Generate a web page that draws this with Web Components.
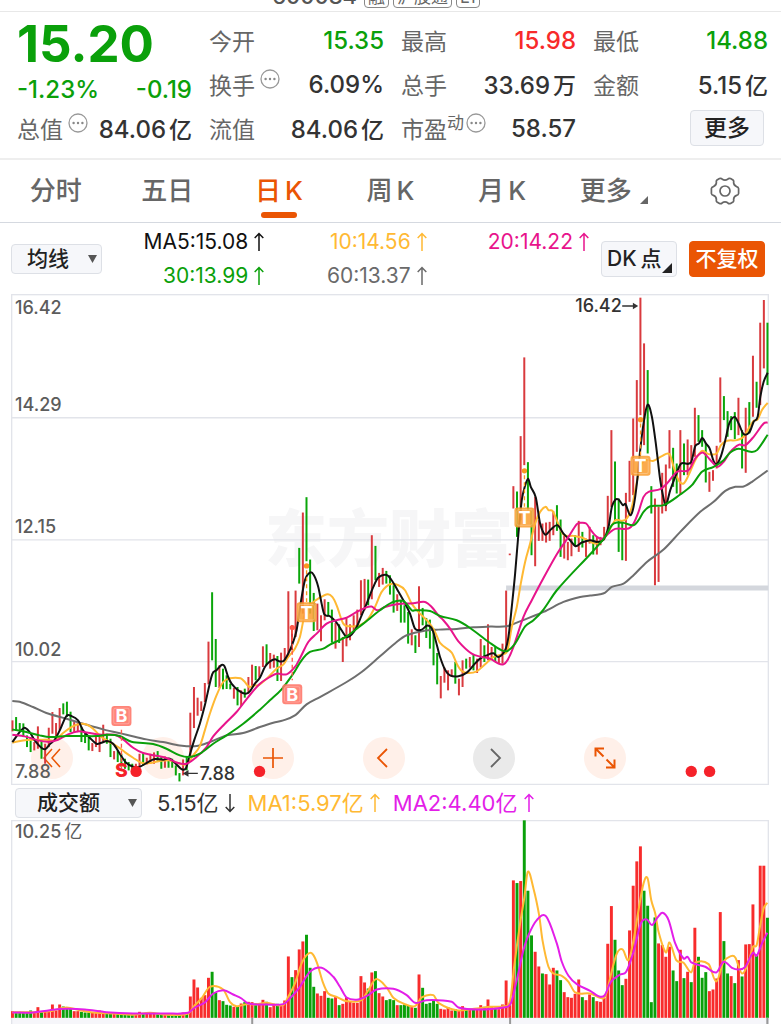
<!DOCTYPE html>
<html lang="zh-CN">
<head>
<meta charset="utf-8">
<meta name="viewport" content="width=device-width, initial-scale=1">
<title>行情</title>
<style>
html{background:#fff}
body{margin:0;color:#333;font-family:Inter,"Noto Sans CJK SC",sans-serif;--green:#0aa00a;--red:#f82a2a;--accent:#ea5504;--line:#e4e4ea}
</style>
</head>
<body>
<stock-page></stock-page>
<script>
const define=(name,html,setup)=>{
  const tpl=document.createElement('template');
  tpl.innerHTML=html;
  customElements.define(name,class extends HTMLElement{
    connectedCallback(){
      if(this.shadowRoot)return;
      const root=this.attachShadow({mode:'open'});
      root.append(tpl.content.cloneNode(true));
      if(setup)setup.call(this,root);
    }
  });
};

/* Trading days: high, low and direction, in chart units (3 per pixel at full size). */
const SERIES=[
 [750,`540 573 r,530 570 g,548 570 g,549 590 g,585 620 g,590 635 g,605 630 r,558 625 r,600 655 g,610 670 r,562 620 r,515 580 r,548 590 r,503 570 r,489 522 g,484 530 g,514 575 g,545 575 r,548 575 r,560 605 g,580 608 g,590 630 g,608 632 r,588 620 r,580 635 r,553 605 r,580 610 g,595 650 g,632 657 r,630 665 g,640 680 g,655 685 g,665 690 g,670 690 g,670 690 r,640 680 r,638 675 g,652 672 r,640 670 r,636 670 r,632 665 g,650 685 g,648 682 r,655 682 g,655 682 g,675 705 g,698 723 g,657 705 r,650 690 g,517 650 r,440 563 r,472 526 r,483 512 r,428 485 r,304 432 r,156 360 g,296 440 g,375 443 r,385 447 g,405 446 g,430 447 g,443 475 r,440 495 g,450 497 r,445 472 g,410 460 r`],
 [570,`553 620 r,557 600 g,558 592 r,498 560 r,492 555 g,518 565 r,523 562 r,527 602 g,517 602 r,503 548 r,333 530 r,435 510 r,331 470 r,203 310 g,97 400 r,51 243 g,238 400 g,338 452 g,370 450 r,405 483 r,357 420 r,365 405 g,388 487 g,428 505 r,432 488 g,470 545 r,412 498 r,432 480 r,405 455 r,388 435 r,300 405 r,296 390 r,298 375 g,165 357 r,197 300 g,278 320 r,263 313 r,272 310 g,285 343 g,315 397 g,342 392 r,360 427 g,375 427 g,395 490 g,447 495 r,465 518 g,318 500 r,383 435 g,413 473 g,418 505 g,445 555 g,518 612 g,587 654 r,562 607 r,570 630 r,567 590 r,545 610 g,595 645 r,540 620 r,535 565 g,530 562 r,522 570 g,535 578 r,476 562 r,495 545 g,432 540 r,500 540 r,500 545 g,525 550 r,490 550 r,331 510 r,220 225 r`],
 [0,`588 655 r,604 740 g,438 690 r,202 525 r,516 660 g,660 795 g,620 828 r,690 752 r,700 752 r,697 757 r,695 752 r,663 735 r,645 722 g,688 800 g,735 805 r,755 810 r,745 798 r,735 768 g,692 785 r,725 772 g,745 800 r,710 760 r,735 793 g,740 793 r,740 765 r,710 750 r,617 722 r,420 650 r,514 690 g,625 785 g,695 810 g,608 812 r,512 635 r,385 615 r,270 485 r,23 375 r,160 465 r,240 490 g,588 670 g,625 885 r,650 875 r,548 670 r,523 663 r,420 535 r,473 590 g,520 610 g,420 613 r,460 555 g,448 555 r,465 525 r,353 500 r,375 455 g,420 470 g,458 577 g,545 605 r,540 572 r,467 535 r,262 457 r,318 390 g,363 440 g,378 420 g,366 447 g,323 435 r,420 535 g,353 548 r,336 430 g,197 380 r,275 353 g,98 345 r,30 235 r,98 285 g`]
];
const DAYS=SERIES.flatMap(([base,s])=>s.split(',').map(d=>{const[h,l,c]=d.split(' ');return{h:+h+base,l:+l+base,c}}));
const AMOUNT=`20 18 18 18 18 22 18 32 20 18 20 40 22 40 34 28 28 20 20 18 16 16 16 14 22 16 16 14 14 14 13 12 12 11 14 18 13 12 13 12 11 13 12 12 11 10 10 16 14 64 115 91 60 68 120 138 75 53 50 39 37 33 35 43 47 48 47 43 44 54 48 32 42 42 38 52 184 122 143 205 229 249 150 93 73 66 80 60 58 62 38 42 62 50 45 45 125 106 88 136 140 74 64 53 56 53 38 38 40 38 32 30 130 90 42 45 52 42 27 25 32 22 26 22 35 28 26 24 24 38 33 55 32 30 26 40 112 38 412 404 410 592 381 247 198 154 133 131 100 150 142 113 77 62 60 72 115 62 53 70 62 50 48 60 222 335 234 142 98 117 262 396 469 514 381 336 47 301 223 218 183 213 142 110 204 119 138 107 270 183 120 137 80 85 118 317 230 133 125 104 173 124 220 221 340 190 456 456 300`.split(' ').map(Number);
/* Days whose turnover bar is coloured against the direction of the price bar. */
const FLIPPED=new Set([77,79,141,155,146,174,177,187,198,203]);
const dayX=i=>38.4+10.88*i;

/* A curve is a list of [dx, dy, "x y, x y"] stretches joined and smoothed. */
const curve=(parts,color,w=6)=>{
  const p=parts.flatMap(([dx,dy,s])=>s.split(',').map(q=>{const[x,y]=q.trim().split(' ').map(Number);return[x+dx,y+dy]}));
  let d='M'+p[0];
  for(let i=0;i<p.length-1;i++){
    const a=p[i-1]||p[i],b=p[i],c=p[i+1],e=p[i+2]||c;
    const k=(c[0]-b[0])/3;
    const m=(u,v)=>v[0]===u[0]?0:(v[1]-u[1])/(v[0]-u[0]);
    d+=`C${(b[0]+k).toFixed(1)} ${(b[1]+k*m(a,c)).toFixed(1)} ${(c[0]-k).toFixed(1)} ${(c[1]-k*m(b,e)).toFixed(1)} ${c[0]} ${c[1]}`;
  }
  return `<path d="${d}" fill="none" stroke="${color}" stroke-width="${w}" stroke-linejoin="round"/>`;
};
const MA60=[[0,750,'38 482,60 484,100 500,140 518,200 535,250 550,310 567,380 583,440 597,490 605,540 615,590 617,630 605,680 585,730 578,780 560'],[540,570,'280 727,310 720,345 705,380 672,420 650,500 605,545 575,600 528,650 485,680 465,730 452,775 448'],[1170,570,'200 446,250 441,300 439,350 438,380 427,460 395,520 365,570 350,600 346'],[1440,0,'360 912,375 907,395 890,430 880,460 855,500 815,550 778,600 725,660 665,700 635,735 602,765 590,790 589,815 575,862 541']];
const MA30=[[0,750,'38 567,80 575,120 585,150 590,200 587,250 587,290 587,325 583,360 587,395 604,460 611,500 625,540 645,570 650,600 640,640 610,680 585,730 550,780 508'],[540,570,'270 660,305 627,340 580,365 540,390 515,430 505,450 493,500 468,550 430,600 390,635 367,670 362,695 390'],[1170,570,'75 390,120 392,150 407,200 420,240 443,300 488,335 510,352 512,375 490,405 438,430 420,460 388,500 330,600 222'],[1440,0,'350 770,375 740,395 705,410 697,430 698,460 705,475 690,490 665,510 648,550 645,600 613,635 585,665 545,700 530,730 510,750 487,775 476,810 485,830 480,862 434']];
const MA20=[[0,750,'38 583,75 588,115 600,145 604,175 598,205 582,235 573,265 577,300 583,345 583,370 597,400 622,430 638,465 645,500 653,535 668,560 670,590 650,620 620,640 588,675 550,710 515,745 470,780 430'],[540,570,'270 590,290 580,320 582,345 560,362 530,385 485,410 460,440 430,470 420,500 412,530 395,555 383,575 379,592 390,615 380,650 372,700 369,735 365,755 380,775 405'],[1170,570,'160 420,180 445,205 483,245 520,275 530,300 535,325 550,340 552,352 540,370 500,400 410,425 360,450 312,500 222,535 170,560 132'],[1440,0,'300 698,318 700,332 720,350 740,368 745,385 730,405 716,445 715,460 700,475 665,490 620,505 605,540 597,560 580,590 545,625 540,645 505,666 487,680 498,695 515,712 530,730 515,750 485,775 464,795 465,820 440,850 400,862 397']];
const MA10=[[0,750,'38 607,70 600,110 598,140 598,165 600,190 578,215 560,240 551,262 553,280 565,305 590,330 605,355 620,375 635,400 652,425 667,450 668,480 662,510 660,535 668,560 672,580 645,600 617,615 570,630 520,650 465,670 425,690 414,722 414,735 425,748 440,765 435'],[540,570,'235 615,260 595,290 565,310 553,325 530,345 505,360 470,375 400,395 370,415 355,443 342,457 350,470 375,490 430,510 438,540 435,565 415,585 380,605 335,630 312,655 315,675 330,695 370,720 400,745 425'],[1170,570,'135 455,150 488,185 517,200 550,215 572,235 578,260 573,285 552,310 530,335 522,352 510,365 440,380 380,392 310,405 245,420 190,435 130,450 95'],[1440,0,'197 650,205 660,217 662,232 695,250 733,280 737,305 742,345 760,365 752,385 725,405 690,425 692,440 685,455 650,465 600,480 530,495 510,520 512,545 498,568 492,580 530,595 570,610 580,625 555,645 510,665 482,685 492,709 490,722 465,740 452,770 450,790 440,808 410,820 392,832 388,845 360,862 338']];
const MA5=[[0,750,'38 605,72 563,90 575,105 600,125 622,137 626,150 612,165 598,180 570,200 527,215 527,235 540,250 570,270 592,290 610,305 607,322 602,340 610,360 640,380 668,400 679,420 679,445 665,465 656,490 658,510 655,530 672,545 686,558 684,568 650,583 600,600 550,615 495,637 402,650 390,665 374,674 378,685 410,695 430,715 450,737 460,750 453,765 430'],[540,570,'240 592,255 560,268 545,285 537,298 543,312 541,325 520,338 490,350 450,362 370,375 300,390 277,402 285,415 320,425 370,433 402,450 408,468 425,485 450,500 470,515 463,530 440,545 405,560 370,580 320,595 292,620 284,635 300,650 325,670 360,690 400,705 445,725 448,742 436,757 448,772 500'],[1170,570,'150 530,165 568,180 585,205 588,230 577,250 555,270 535,290 525,310 519,325 530,345 510,355 470'],[1440,0,'95 950,105 850,115 730,125 630,134 590,144 566,152 590,167 622,180 700,195 733,212 718,232 705,250 730,270 750,286 768,305 757,330 750,350 755,370 748,385 710,395 650,405 629,415 628,428 645,436 642,450 675,460 650,470 580,480 480,490 400,502 344,515 380,528 470,540 570,550 625,557 645,570 600,585 560,602 521,632 517,645 468,656 460,666 444,677 460,688 475,700 513,709 522,722 498,735 450,747 400,763 381,775 400,790 432,808 425,820 395,832 380,840 320,850 275,862 248']];
const VMA1=[[0,0,'38 696,100 696,150 693,200 682,240 690,290 698,340 700,400 704,450 698,500 704,565 700,585 675,605 655,630 620,670 628,690 665,710 678,740 672,765 673,800 668,850 675,865 650,885 610,905 550,920 525,935 519,950 545,970 610,985 640,1010 650,1040 663,1085 660,1105 630,1128 597,1160 622'],[1170,0,'10 653,40 670,75 678,95 652,130 645,145 668,200 690,260 685,300 680,340 678,360 662,372 560,390 430,403 350,413 275,430 325,447 405,457 480,475 560,490 580,515 587,535 605,555 637,600 640,640 655,650 635,663 580,680 520,697 508,715 540,730 480,745 390,760 310,772 294,783 360,795 400,805 455,827 517,838 487,858 540,880 548,903 577,913 548,955 552,978 604,1000 545,1022 528,1035 532,1055 580,1075 545,1088 500,1099 495,1109 440,1120 385,1131 368']];
const VMA2=[[0,0,'38 697,100 697,150 690,200 686,255 688,320 696,400 700,500 700,565 698,585 682,615 667,640 640,672 630,700 643,725 655,745 670,800 673,850 672,870 655,900 620,930 575,965 563,1000 590,1020 620,1040 652,1075 658,1105 645,1130 628'],[1170,0,'10 626,50 645,75 668,110 660,185 665,205 682,265 688,340 682,362 670,380 600,400 510,415 465,440 420,468 409,500 490,515 545,535 587,560 612,600 632,625 648,643 646,662 605,690 583,708 575,730 515,752 430,770 418,785 435,802 412,817 398,835 420,855 490,880 535,892 530,903 547,945 560,978 577,1000 545,1025 563,1045 568,1065 560,1088 518,1099 527,1115 490,1131 458']];

define('title-strip',`
<style>
:host{display:flex;justify-content:center;align-items:flex-end;gap:4px;height:12px;box-sizing:border-box;padding:0 29px 3px 0;overflow:hidden;border-bottom:1px solid #e8e8e8;font-size:22px;line-height:24px;color:#555}
b{font-weight:500;margin-right:3px}
span{border:1px solid #888;border-radius:4px;padding:0 3px;font-size:17px;line-height:20px;color:#666}
</style><b>600084</b><span>融</span><span>沪股通</span><span>L1</span>`);

define('info-dots',`
<style>:host{display:block;width:20px;height:20px}svg{display:block}</style>
<svg width="20" height="20" viewBox="0 0 20 20"><circle cx="10" cy="10" r="9" fill="none" stroke="#999" stroke-width="1.3"/><g fill="#888"><circle cx="5.6" cy="10" r="1.2"/><circle cx="10" cy="10" r="1.2"/><circle cx="14.4" cy="10" r="1.2"/></g></svg>`);

define('stat-item',`
<style>
:host{display:flex;align-items:center;height:44px;white-space:nowrap}
.k{font-size:23px;color:#666}
.v{margin-left:auto;font-weight:500;font-size:24px;color:var(--tone,#333)}
.n{align-self:flex-start;display:flex;margin-top:7px}
</style><span class="k"><slot name="k"></slot></span><span class="n"><slot name="note"></slot></span><span class="v"><slot></slot></span>`);

define('quote-price',`
<style>
:host{display:flex;flex-direction:column;grid-row:span 2;color:var(--green)}
.p{font-size:51px;line-height:52px;font-weight:700}
.d{display:flex;justify-content:space-between;font-size:24px;line-height:40px;font-weight:500}
</style><div class="p">15.20</div><div class="d"><span>-1.23%</span><span>-0.19</span></div>`);

define('quote-panel',`
<style>
:host{display:grid;grid-template-columns:repeat(4,minmax(0,1fr));grid-auto-rows:44px;column-gap:17px;padding:6px 13px 8px 17px;border-bottom:2px solid #eee}
.g{--tone:var(--green)}.r{--tone:var(--red)}
.u{font-size:23px;margin-left:3px}
sup{font-size:17px;line-height:20px;color:#666;margin-right:2px}
info-dots.s{margin-left:5px}
.more{display:flex;align-items:center;justify-content:flex-end;padding-right:4px}
button{font:500 23px/33px Inter,"Noto Sans CJK SC",sans-serif;width:74px;height:36px;padding:0;border:1px solid #dde0e6;border-radius:4px;background:#f6f7fa;color:#222}
</style>
<quote-price></quote-price>
<stat-item class="g"><span slot="k">今开</span>15.35</stat-item>
<stat-item class="r"><span slot="k">最高</span>15.98</stat-item>
<stat-item class="g"><span slot="k">最低</span>14.88</stat-item>
<stat-item><span slot="k">换手</span><info-dots class="s" slot="note"></info-dots>6.09%</stat-item>
<stat-item><span slot="k">总手</span>33.69<span class="u">万</span></stat-item>
<stat-item><span slot="k">金额</span>5.15<span class="u">亿</span></stat-item>
<stat-item><span slot="k">总值</span><info-dots class="s" slot="note"></info-dots>84.06<span class="u">亿</span></stat-item>
<stat-item><span slot="k">流值</span>84.06<span class="u">亿</span></stat-item>
<stat-item><span slot="k">市盈</span><sup slot="note">动</sup><info-dots slot="note"></info-dots>58.57</stat-item>
<div class="more"><button type="button">更多</button></div>`);

define('period-tabs',`
<style>
:host{display:block;border-bottom:1px solid #d5d9e0}
nav{display:grid;grid-template-columns:repeat(7,minmax(0,1fr));height:62px}
button{position:relative;display:flex;align-items:center;justify-content:center;gap:4px;border:0;background:none;padding:0;font:500 26px/36px Inter,"Noto Sans CJK SC",sans-serif;color:#666}
button.on{color:var(--accent)}
button.on::after{content:"";position:absolute;bottom:4px;left:50%;width:36px;height:6px;margin-left:-18px;border-radius:3px;background:var(--accent)}
.tri{align-self:flex-end;margin:0 0 18px 4px}
</style>
<nav><button>分时</button><button>五日</button><button class="on"><span>日</span><span>K</span></button><button><span>周</span><span>K</span></button><button><span>月</span><span>K</span></button><button>更多<svg class="tri" width="8" height="8"><path d="M8 0V8H0Z" fill="#666"/></svg></button>
<button aria-label="设置"><svg width="30" height="28" viewBox="0 0 30 28" fill="none" stroke="#666" stroke-width="1.7" stroke-linejoin="round"><path d="M9.500 1.500Q11 .8 12.300 2.200Q15 4 17.700 2.200Q19 .8 20.500 1.500L23 3Q24 3.800 23.600 5.300Q23.600 8.600 26.600 9.600Q28.400 10 28.600 11.500V16.500Q28.400 18 26.600 18.400Q23.600 19.400 23.600 22.700Q24 24.200 23 25L20.500 26.500Q19 27.200 17.700 25.800Q15 24 12.300 25.800Q11 27.200 9.500 26.500L7 25Q6 24.200 6.400 22.700Q6.400 19.400 3.400 18.400Q1.600 18 1.400 16.500V11.500Q1.600 10 3.400 9.600Q6.400 8.600 6.400 5.300Q6 3.800 7 3Z"/><circle cx="15" cy="14" r="5"/></svg></button></nav>`);

define('trend-value',`
<style>
:host{display:flex;align-items:center;justify-content:flex-end;gap:6px;font-size:21px;line-height:34px;white-space:nowrap}
:host([down]) svg{transform:rotate(180deg)}
</style><span><slot></slot></span><svg width="10" height="20" viewBox="0 0 10 20" fill="none" stroke="currentColor" stroke-width="1.5"><path d="M5 19V1.500M.7 6L5 1.500L9.300 6"/></svg>`);

const SELECT=`.box{position:relative;display:block;flex:none}
select{appearance:none;display:block;width:100%;height:30px;box-sizing:border-box;border:1px solid #dde0e6;border-radius:4px;background:#f6f7fa;color:#222;font:500 21px/26px Inter,"Noto Sans CJK SC",sans-serif;padding:0 0 0 15px;margin:0}
.box svg{position:absolute;right:5px;top:11px}`;

define('ma-bar',`
<style>${SELECT}
:host{display:flex;align-items:center;gap:12px;height:71px;padding:0 16px 0 11px}
.box{width:91px}
.legend{flex:1;display:grid;grid-template-columns:repeat(3,minmax(0,1fr));margin-left:-12px}
button{position:relative;flex:none;width:76px;height:36px;padding:0;border:1px solid #dde0e6;border-radius:4px;background:#f6f7fa;color:#222;font:500 21px/32px Inter,"Noto Sans CJK SC",sans-serif;white-space:nowrap;text-align:left}
.dk{padding-left:5px}
.dk span{margin-left:4px}
.dk svg{position:absolute;right:4px;bottom:3px}
.fq{background:var(--accent);border-color:var(--accent);color:#fff;text-align:center}
</style>
<label class="box"><select aria-label="均线指标"><option>均线</option></select><svg width="9" height="8"><path d="M0 0H9L4.500 8Z" fill="#555"/></svg></label>
<div class="legend">
<trend-value style="color:#111">MA5:15.08</trend-value><trend-value style="color:#ffb933">10:14.56</trend-value><trend-value style="color:#e8148c">20:14.22</trend-value>
<trend-value style="color:#0aa00a">30:13.99</trend-value><trend-value style="color:#6a6a6a">60:13.37</trend-value>
</div>
<button class="dk" type="button">DK<span>点</span><svg width="10" height="10"><path d="M10 0V10H0Z" fill="#222"/></svg></button>
<button class="fq" type="button">不复权</button>`);

define('round-tool',`
<style>
:host{display:block;width:42px;height:42px}
button{display:flex;align-items:center;justify-content:center;width:42px;height:42px;border:0;padding:0;border-radius:50%;background:#fff0e9;color:var(--accent)}
:host([muted]) button{background:#eaeaea;color:#666}
</style><button type="button"><slot></slot></button>`);

define('price-chart',`
<style>
:host{display:block;position:relative;margin:0 12px 0 11px}
svg{display:block}
.plot{position:relative;width:100%;height:auto;pointer-events:none}
.tools{position:absolute;left:20px;right:143px;bottom:6px;display:flex;justify-content:space-between}
.plot text{font-family:Inter,"Noto Sans CJK SC",sans-serif}
</style>
<div class="tools">
<round-tool><svg width="18" height="20" viewBox="0 0 18 20" fill="none" stroke="currentColor" stroke-width="1.500"><path d="M9 1L1 10L9 19M17 1L9 10L17 19"/></svg></round-tool>
<round-tool></round-tool>
<round-tool><svg width="20" height="20" viewBox="0 0 20 20" fill="none" stroke="currentColor" stroke-width="1.700"><path d="M0 10H20M10 0V20"/></svg></round-tool>
<round-tool><svg width="20" height="20" viewBox="0 0 20 20" fill="none" stroke="currentColor" stroke-width="1.800"><path d="M13 1L4 10L13 19"/></svg></round-tool>
<round-tool muted><svg width="20" height="20" viewBox="0 0 20 20" fill="none" stroke="currentColor" stroke-width="1.800"><path d="M7 1L16 10L7 19"/></svg></round-tool>
<round-tool><svg width="22" height="22" viewBox="0 0 22 22" fill="none" stroke="currentColor" stroke-width="2"><path d="M1.500 9.500V1.500H10M2 2L9.500 9.500M20.500 12.500V20.500H12M20 20L12.500 12.500"/></svg></round-tool>
</div>
<svg class="plot" viewBox="34 12 2272 1472"></svg>`,function(root){
  const C={r:'#d93a3e',g:'#0aa60a'};
  const tag=(x,y,t,color)=>`<rect x="${x-30}" y="${y-30}" width="60" height="60" rx="9" fill="${color}" fill-opacity=".88"/><rect x="${x-23}" y="${y-23}" width="46" height="46" rx="5" fill="none" stroke="#fff" stroke-opacity=".25" stroke-width="3"/><text x="${x}" y="${y+19}" font-size="54" font-weight="700" fill="#fff" text-anchor="middle">${t}</text>`;
  const lead=(x,y1,y2,color)=>`<path d="M${x} ${y1}V${y2}" stroke="${color}" stroke-width="4" stroke-dasharray="12 9"/>`;
  const dot=(x,y,r,color)=>`<circle cx="${x}" cy="${y}" r="${r}" fill="${color}"/>`;
  const label=(x,y,t)=>`<text x="${x}" y="${y}" font-size="54" font-weight="500" fill="#5c5c5c">${t}</text>`;
  root.querySelector('.plot').innerHTML=
    `<text x="795" y="816" font-size="186" font-weight="900" fill="#f6f6f7">东方财富</text>`+
    `<g stroke="#e2e4ea" stroke-width="4" fill="none"><rect x="36" y="14" width="2268" height="1468"/><path d="M34 383H2306M34 749H2306M34 1114H2306"/></g>`+
    `<path d="M1518 893H2304" stroke="#d4d7dd" stroke-width="15"/>`+
    DAYS.map((d,i)=>`<path d="M${dayX(i).toFixed(1)} ${d.h}V${d.l}" stroke="${C[d.c]}" stroke-width="6"/>`).join('')+
    curve(MA60,'#6e6e6e')+curve(MA10,'#ffb933')+curve(MA5,'#111')+curve(MA20,'#e8148c')+curve(MA30,'#0aa00a')+
    lead(365,1318,1445,'#ff5a4a')+tag(365,1277,'B','#ff7466')+
    lead(877,1018,1170,'#ff5a4a')+dot(877,1012,8,'#ff5a4a')+tag(877,1212,'B','#ff7466')+
    lead(920,840,935,'#fb9722')+dot(920,827,8,'#fb9722')+tag(920,966,'T','#fb9f33')+
    lead(1573,555,650,'#fb9722')+dot(1573,542,8,'#fb9722')+tag(1573,682,'T','#fb9f33')+
    lead(1921,400,495,'#fb9722')+dot(1921,389,8,'#fb9722')+tag(1921,527,'T','#fb9f33')+
    `<text x="365" y="1459" font-size="58" font-weight="800" fill="#f5222a" text-anchor="middle">S</text>`+
    dot(409,1443,17,'#f5222a')+dot(779,1443,17,'#f5222a')+dot(2073,1443,17,'#f5222a')+dot(2128,1443,17,'#f5222a')+
    label(46,72,'16.42')+label(46,362,'14.29')+label(46,728,'12.15')+label(46,1098,'10.02')+label(46,1463,'7.88')+
    `<g font-size="54" font-weight="500" fill="#333"><text x="1725" y="67">16.42</text><text x="599" y="1469">7.88</text></g>`+
    `<g fill="#333"><path d="M1866 46H1898V38L1914 48L1898 58V50H1866Z"/><path d="M594 1447H566V1439L549 1449L566 1459V1451H594Z"/></g>`;
});

define('volume-bar',`
<style>${SELECT}
:host{display:flex;align-items:center;gap:13px;height:35px;padding:0 15px}
.box{width:127px;margin-right:2px}
.box select{padding-left:21px}
trend-value{font-size:22px}
</style>
<label class="box"><select aria-label="副图指标"><option>成交额</option></select><svg width="9" height="8"><path d="M0 0H9L4.500 8Z" fill="#555"/></svg></label>
<trend-value down style="color:#333">5.15亿</trend-value>
<trend-value style="color:#ffb933">MA1:5.97亿</trend-value>
<trend-value style="color:#e31ee8">MA2:4.40亿</trend-value>`);

define('volume-chart',`
<style>
:host{display:block;margin:0 12px 0 11px}
svg{display:block;width:100%;height:auto;font-family:Inter,"Noto Sans CJK SC",sans-serif}
</style><svg viewBox="34 120 2272 612"></svg>`,function(root){
  root.querySelector('svg').innerHTML=
    `<rect x="34" y="713" width="2272" height="19" fill="#f6f6fa"/>`+
    `<path d="M36 732V122H2304V732" fill="none" stroke="#e2e4ea" stroke-width="4"/>`+
    AMOUNT.map((h,i)=>{const up=(DAYS[i].c==='r')!==FLIPPED.has(i);return `<rect x="${(dayX(i)-4.4).toFixed(1)}" y="${713-h}" width="8.800" height="${h}" fill="${up?'#f82c2c':'#0aa00a'}"/>`}).join('')+
    curve(VMA1,'#ffb933')+curve(VMA2,'#e31ee8')+
    `<path d="M757 713V732M1530 713V732M2301 713V732" stroke="#999" stroke-width="6"/>`+
    `<text x="46" y="174" font-size="54" font-weight="500" fill="#5c5c5c">10.25<tspan dx="9" font-weight="400">亿</tspan></text>`;
});

define('stock-page',`
<style>:host{display:block}</style>
<title-strip></title-strip>
<quote-panel></quote-panel>
<period-tabs></period-tabs>
<ma-bar></ma-bar>
<price-chart></price-chart>
<volume-bar></volume-bar>
<volume-chart></volume-chart>`);
</script>
</body>
</html>
